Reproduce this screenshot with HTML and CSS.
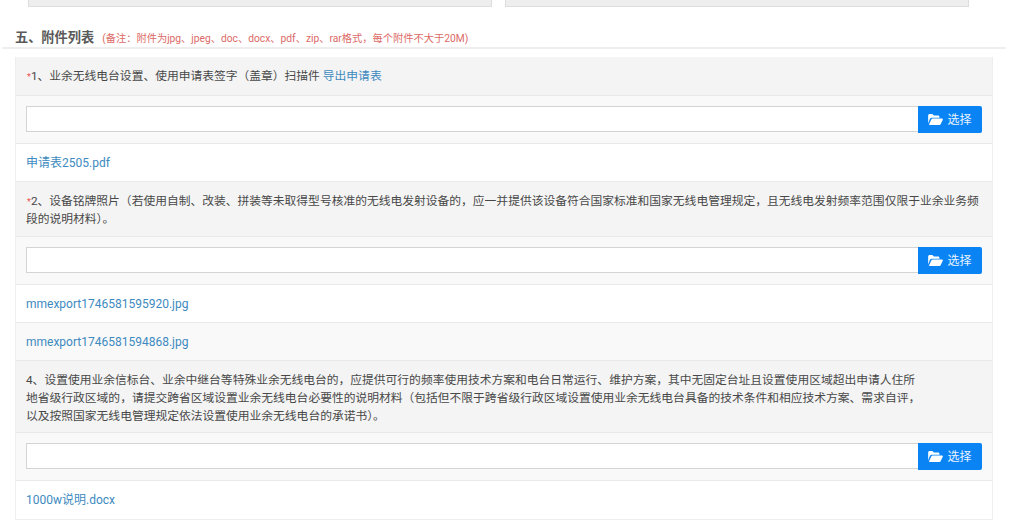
FILE: index.html
```html
<!DOCTYPE html>
<html lang="zh-CN">
<head>
<meta charset="utf-8">
<title>附件列表</title>
<link rel="stylesheet" href="styles.css">
</head>
<body>
<div class="top-fields">
  <div class="top-field"></div>
  <div class="top-field"></div>
</div>
<div class="section-head">
  <h2 class="section-title">五、附件列表</h2>
  <span class="section-note">(备注：附件为jpg、jpeg、doc、docx、pdf、zip、rar格式，每个附件不大于20M)</span>
</div>
<div class="list">
  <div class="row head head-one"><span class="req">*</span>1、业余无线电台设置、使用申请表签字（盖章）扫描件 <a class="link">导出申请表</a></div>
  <div class="row upload">
    <div class="file-input"></div>
    <button class="pick"><svg class="folder" viewBox="0 0 16 12"><path d="M0 10.4V1.6C0 .7.7 0 1.6 0h3l1.6 1.5h4.6c.9 0 1.5.7 1.5 1.5v1H4.2c-1 0-1.8.5-2.3 1.3z"/><path d="M1 11.2 3.4 6c.3-.6.9-1 1.6-1h10.2c.6 0 1 .6.7 1.2l-2.2 4.6c-.3.7-1 1.2-1.7 1.2H1.6c-.5 0-.8-.4-.6-.8z"/></svg>选择</button>
  </div>
  <div class="row file"><a class="link">申请表2505.pdf</a></div>

  <div class="row head head-two"><span class="req">*</span>2、设备铭牌照片（若使用自制、改装、拼装等未取得型号核准的无线电发射设备的，应一并提供该设备符合国家标准和国家无线电管理规定，且无线电发射频率范围仅限于业余业务频段的说明材料）。</div>
  <div class="row upload">
    <div class="file-input"></div>
    <button class="pick"><svg class="folder" viewBox="0 0 16 12"><path d="M0 10.4V1.6C0 .7.7 0 1.6 0h3l1.6 1.5h4.6c.9 0 1.5.7 1.5 1.5v1H4.2c-1 0-1.8.5-2.3 1.3z"/><path d="M1 11.2 3.4 6c.3-.6.9-1 1.6-1h10.2c.6 0 1 .6.7 1.2l-2.2 4.6c-.3.7-1 1.2-1.7 1.2H1.6c-.5 0-.8-.4-.6-.8z"/></svg>选择</button>
  </div>
  <div class="row file"><a class="link">mmexport1746581595920.jpg</a></div>
  <div class="row file alt"><a class="link">mmexport1746581594868.jpg</a></div>

  <div class="row head head-three">4、设置使用业余信标台、业余中继台等特殊业余无线电台的，应提供可行的频率使用技术方案和电台日常运行、维护方案，其中无固定台址且设置使用区域超出申请人住所<br>地省级行政区域的，请提交跨省区域设置业余无线电台必要性的说明材料（包括但不限于跨省级行政区域设置使用业余无线电台具备的技术条件和相应技术方案、需求自评，<br>以及按照国家无线电管理规定依法设置使用业余无线电台的承诺书）。</div>
  <div class="row upload">
    <div class="file-input"></div>
    <button class="pick"><svg class="folder" viewBox="0 0 16 12"><path d="M0 10.4V1.6C0 .7.7 0 1.6 0h3l1.6 1.5h4.6c.9 0 1.5.7 1.5 1.5v1H4.2c-1 0-1.8.5-2.3 1.3z"/><path d="M1 11.2 3.4 6c.3-.6.9-1 1.6-1h10.2c.6 0 1 .6.7 1.2l-2.2 4.6c-.3.7-1 1.2-1.7 1.2H1.6c-.5 0-.8-.4-.6-.8z"/></svg>选择</button>
  </div>
  <div class="row file"><a class="link">1000w说明.docx</a></div>
</div>
</body>
</html>
```
FILE: styles.css
```css
* { box-sizing: border-box; }
html, body { margin: 0; height: 520px; overflow: hidden; background: #fff; }
body {
  font-family: Roboto, "Noto Sans CJK SC", sans-serif;
  font-size: 11.78px;
  color: #484848;
}
.top-fields {
  display: flex;
  gap: 13px;
  padding-left: 28px;
  width: 969px;
}
.top-field {
  flex: 1;
  height: 7px;
  background: #eee;
  border: 1px solid #ddd;
  border-top: 0;
}
.section-head {
  display: flex;
  align-items: baseline;
  gap: 8px;
  margin: 0 18px 0 2px;
  padding: 22px 13px 0;
  height: 42px;
  border-bottom: 2px solid #eee;
}
.section-title {
  margin: 0;
  font-size: 13.2px;
  line-height: 18px;
  font-weight: 700;
  color: #5a5a5a;
}
.section-note { font-size: 10.25px; color: #dc6a66; }
.list {
  margin: 8px 31px 0 15px;
  border-left: 1px solid #eee;
  border-right: 1px solid #eee;
  border-bottom: 1px solid #eee;
}
.row {
  padding: 0 10px;
  border-bottom: 1px solid #e9e9e9;
  line-height: 18px;
}
.row:last-child { border-bottom: 0; }
.head { background: #f4f4f4; }
.head-one { padding-top: 10px; padding-bottom: 10px; }
.head-two { padding-top: 10px; padding-bottom: 8px; }
.head-three { padding-top: 10px; padding-bottom: 7px; }
.upload {
  display: flex;
  align-items: flex-start;
  height: 48px;
  padding-top: 10px;
  padding-bottom: 10px;
  background: #f9f9f9;
}
.file {
  display: flex;
  align-items: center;
  height: 38px;
  background: #fff;
  font-size: 12px;
}
.alt { background: #f9f9f9; }
.link { color: #3d8abf; }
.req { margin-left: 1px; font-size: 9px; line-height: 0; color: #e55; }
.file-input {
  flex: 1;
  height: 26px;
  background: #fff;
  border: 1px solid #d4d4d4;
  border-right: 0;
}
.pick {
  display: flex;
  align-items: center;
  justify-content: center;
  gap: 4px;
  width: 64px;
  height: 27px;
  margin: 0;
  padding: 0;
  border: 0;
  border-radius: 0 2px 2px 0;
  background: #0a84f5;
  color: #e8f3ff;
  font: inherit;
  font-size: 12px;
}
.folder { width: 15px; height: 11px; fill: #fff; }
```
